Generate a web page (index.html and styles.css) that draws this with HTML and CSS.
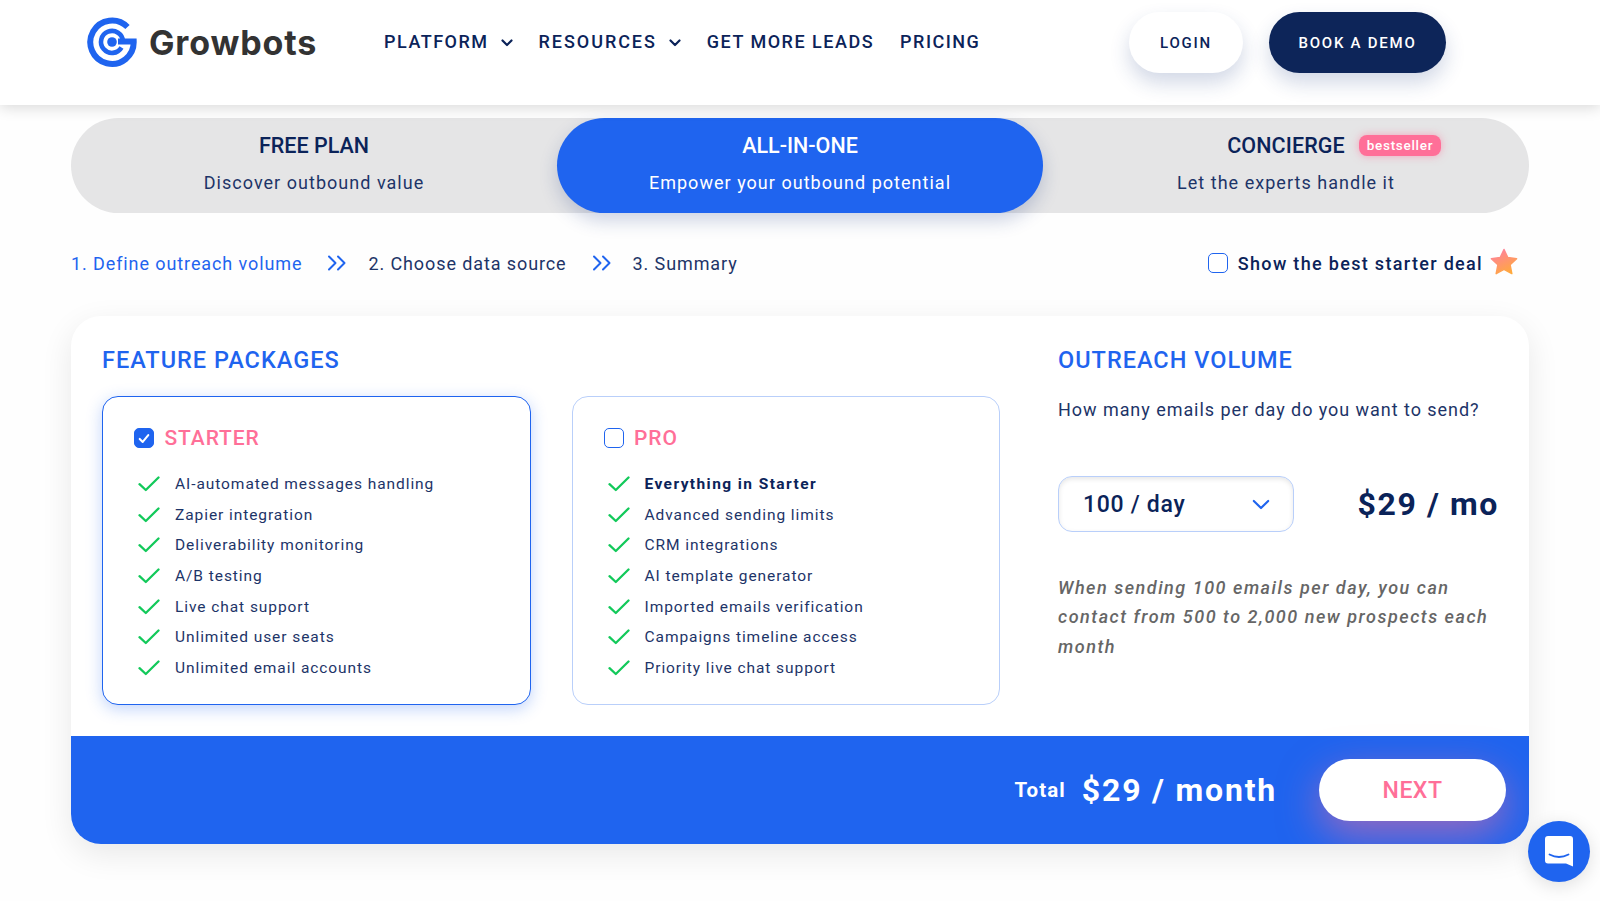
FILE: index.html
```html
<!DOCTYPE html>
<html lang="en">
<head>
<meta charset="utf-8">
<title>Growbots pricing</title>
<link rel="stylesheet" href="styles.css">
</head>
<body>
<svg class="defs" width="0" height="0" aria-hidden="true">
  <symbol id="tick" viewBox="0 0 22 16"><path d="M1.5 8.2 L7.8 14 L20.5 1.5" fill="none" stroke="#12c95a" stroke-width="2.3" stroke-linecap="round" stroke-linejoin="round"/></symbol>
  <symbol id="dbl" viewBox="0 0 20 16"><path d="M2 1.5 L8.5 8 L2 14.5 M11 1.5 L17.5 8 L11 14.5" fill="none" stroke="#1f64ef" stroke-width="2" stroke-linecap="round" stroke-linejoin="round"/></symbol>
  <symbol id="caret" viewBox="0 0 12 8"><path d="M1.5 1.5 L6 6 L10.5 1.5" fill="none" stroke="#0b2359" stroke-width="2.2" stroke-linecap="round" stroke-linejoin="round"/></symbol>
</svg>
<header class="topbar">
  <a class="brand">
    <svg class="logo" viewBox="0 0 52 52" aria-hidden="true">
      <path d="M41.5 11 A21.7 21.7 0 1 0 47.7 25.5 H32" fill="none" stroke="#1f64ef" stroke-width="6"/>
      <path d="M35.5 31.5 A11 11 0 1 1 37 25.5" fill="none" stroke="#1f64ef" stroke-width="4.6"/>
      <circle cx="26" cy="26" r="4.8" fill="#1f64ef"/>
    </svg>
    <span class="brand-name">Growbots</span>
  </a>
  <nav class="nav">
    <a class="nav-item">PLATFORM <svg class="caret"><use href="#caret"/></svg></a>
    <a class="nav-item nav-wide">RESOURCES <svg class="caret"><use href="#caret"/></svg></a>
    <a class="nav-item">GET MORE LEADS</a>
    <a class="nav-item">PRICING</a>
  </nav>
  <div class="actions">
    <a class="btn btn-login">LOGIN</a>
    <a class="btn btn-demo">BOOK A DEMO</a>
  </div>
</header>

<main class="page">
  <section class="tabs">
    <div class="tab">
      <div class="tab-title">FREE PLAN</div>
      <div class="tab-sub">Discover outbound value</div>
    </div>
    <div class="tab tab-active">
      <div class="tab-title">ALL-IN-ONE</div>
      <div class="tab-sub">Empower your outbound potential</div>
    </div>
    <div class="tab">
      <div class="tab-title"><span class="badged">CONCIERGE<span class="badge">bestseller</span></span></div>
      <div class="tab-sub">Let the experts handle it</div>
    </div>
  </section>

  <section class="steps">
    <span class="step step-on">1. Define outreach volume</span>
    <svg class="dbl"><use href="#dbl"/></svg>
    <span class="step">2. Choose data source</span>
    <svg class="dbl"><use href="#dbl"/></svg>
    <span class="step">3. Summary</span>
    <label class="deal">
      <span class="box"></span>
      <span class="deal-text">Show the best starter deal</span>
      <svg class="star" viewBox="0 0 28 28" aria-hidden="true">
        <defs><linearGradient id="sg" x1="0.2" y1="0" x2="0.7" y2="1"><stop offset="0" stop-color="#ff7fa0"/><stop offset="1" stop-color="#ffaa3c"/></linearGradient></defs>
        <path d="M14 1.5 L17.8 9.6 L26.6 10.7 L20.1 16.8 L21.8 25.6 L14 21.3 L6.2 25.6 L7.9 16.8 L1.4 10.7 L10.2 9.6 Z" fill="url(#sg)" stroke="url(#sg)" stroke-width="1.5" stroke-linejoin="round"/>
      </svg>
    </label>
  </section>

  <section class="card">
    <div class="card-body">
      <div class="packages">
        <h2 class="heading">FEATURE PACKAGES</h2>
        <div class="plans">
          <article class="plan plan-on">
            <div class="plan-head">
              <span class="box box-on"><svg viewBox="0 0 14 12" class="box-tick" aria-hidden="true"><path d="M2 6.5 L5.5 10 L12 2" fill="none" stroke="#fff" stroke-width="2.4" stroke-linecap="round" stroke-linejoin="round"/></svg></span>
              <span class="plan-name">STARTER</span>
            </div>
            <ul class="feats">
              <li><svg class="tick"><use href="#tick"/></svg>AI-automated messages handling</li>
              <li><svg class="tick"><use href="#tick"/></svg>Zapier integration</li>
              <li><svg class="tick"><use href="#tick"/></svg>Deliverability monitoring</li>
              <li><svg class="tick"><use href="#tick"/></svg>A/B testing</li>
              <li><svg class="tick"><use href="#tick"/></svg>Live chat support</li>
              <li><svg class="tick"><use href="#tick"/></svg>Unlimited user seats</li>
              <li><svg class="tick"><use href="#tick"/></svg>Unlimited email accounts</li>
            </ul>
          </article>
          <article class="plan">
            <div class="plan-head">
              <span class="box"></span>
              <span class="plan-name">PRO</span>
            </div>
            <ul class="feats">
              <li class="feat-strong"><svg class="tick"><use href="#tick"/></svg>Everything in Starter</li>
              <li><svg class="tick"><use href="#tick"/></svg>Advanced sending limits</li>
              <li><svg class="tick"><use href="#tick"/></svg>CRM integrations</li>
              <li><svg class="tick"><use href="#tick"/></svg>AI template generator</li>
              <li><svg class="tick"><use href="#tick"/></svg>Imported emails verification</li>
              <li><svg class="tick"><use href="#tick"/></svg>Campaigns timeline access</li>
              <li><svg class="tick"><use href="#tick"/></svg>Priority live chat support</li>
            </ul>
          </article>
        </div>
      </div>
      <aside class="volume">
        <h2 class="heading">OUTREACH VOLUME</h2>
        <p class="question">How many emails per day do you want to send?</p>
        <div class="vol-row">
          <div class="select"><span>100 / day</span><svg class="sel-caret" viewBox="0 0 20 12" aria-hidden="true"><path d="M2 2 L10 10 L18 2" fill="none" stroke="#1f64ef" stroke-width="2.4" stroke-linecap="round" stroke-linejoin="round"/></svg></div>
          <div class="price">$29 / mo</div>
        </div>
        <p class="note">When sending 100 emails per day, you can contact from 500 to 2,000 new prospects each month</p>
      </aside>
    </div>
    <footer class="totalbar">
      <span class="total-label">Total</span>
      <span class="total-value">$29 / month</span>
      <a class="btn-next">NEXT</a>
    </footer>
  </section>
</main>

<a class="chat" aria-label="Chat">
  <svg viewBox="0 0 30 34" width="30" height="34" aria-hidden="true">
    <path d="M4 1 H26 A3 3 0 0 1 29 4 V31.5 L22 28.5 H4 A3 3 0 0 1 1 25.5 V4 A3 3 0 0 1 4 1 Z" fill="#fff"/>
    <path d="M5.5 19.5 Q15 24.5 24.5 19.5" fill="none" stroke="#1f64ef" stroke-width="1.8" stroke-linecap="round"/>
  </svg>
</a>
</body>
</html>
```
FILE: styles.css
```css
* { box-sizing: border-box; }
html, body { margin: 0; height: 901px; overflow: hidden; }
body {
  background: #fefefe;
  color: #0b2359;
  font-family: Roboto, "Liberation Sans", sans-serif;
  position: relative;
}
.defs { position: absolute; }
a { color: inherit; text-decoration: none; }

.topbar {
  height: 105px;
  background: #fff;
  box-shadow: 0 2px 14px rgba(0,0,0,.16);
  display: flex;
  align-items: flex-start;
  padding-left: 86px;
  position: relative;
  z-index: 2;
}
.brand { display: flex; align-items: center; margin-top: 16px; width: 298px; flex: none; }
.logo { width: 52px; height: 52px; flex: none; }
.brand-name {
  margin-left: 11px;
  font-family: Inter, Roboto, sans-serif;
  font-size: 34px;
  font-weight: 700;
  color: #333;
  letter-spacing: .85px;
}
.nav { display: flex; gap: 26px; margin-top: 30px; }
.nav-item {
  display: flex;
  align-items: center;
  font-size: 18px;
  font-weight: 500;
  line-height: 23px;
  letter-spacing: 1.5px;
  color: #0b2359;
  white-space: nowrap;
}
.nav-wide { letter-spacing: 1.95px; }
.caret { width: 12px; height: 8px; margin-left: 12px; margin-top: 2px; }
.actions { display: flex; gap: 26px; margin-left: auto; margin-right: 154px; margin-top: 12px; }
.btn {
  height: 61px;
  border-radius: 31px;
  display: flex;
  align-items: center;
  justify-content: center;
  font-size: 15px;
  font-weight: 500;
  letter-spacing: 1.75px;
  box-shadow: 0 10px 20px rgba(30,60,130,.2);
}
.btn-login { width: 114px; background: #fff; color: #0b2359; }
.btn-demo { width: 177px; background: #0d2559; color: #fff; }

.page { padding: 13px 71px 0; }
.tabs {
  height: 95px;
  border-radius: 48px;
  background: #e5e5e6;
  display: grid;
  grid-template-columns: 486px 486px 486px;
}
.tab {
  border-radius: 48px;
  text-align: center;
  padding-top: 14px;
}
.tab-title { font-size: 21.5px; font-weight: 500; line-height: 28px; color: #0b2359; }
.badged { position: relative; display: inline-block; letter-spacing: .1px; }
.tab-sub { margin-top: 11px; font-size: 18px; line-height: 24px; letter-spacing: 1.03px; color: #1d3468; }
.tab-active { background: #1f64ef; box-shadow: 0 8px 18px rgba(30,60,130,.22); }
.tab-active .tab-title, .tab-active .tab-sub { color: #fff; }
.badge {
  position: absolute;
  left: calc(100% + 14px);
  top: 3px;
  height: 21px;
  padding: 0 8px;
  border-radius: 8px;
  background: #ff6f98;
  box-shadow: 0 0 8px rgba(255,111,152,.55);
  color: #fff;
  font-size: 13.5px;
  line-height: 20px;
  font-weight: 500;
  letter-spacing: .7px;
}

.steps { display: flex; align-items: center; height: 24px; margin-top: 38px; padding-right: 11px; font-size: 18px; letter-spacing: .9px; }
.step { color: #1d3468; white-space: nowrap; }
.step-on { color: #1f64ef; }
.dbl { width: 20px; height: 16px; margin: 0 21px 0 25px; flex: none; }
.deal { margin-left: auto; display: flex; align-items: center; }
.deal-text { margin-left: 10px; font-weight: 500; font-size: 18px; letter-spacing: 1.32px; color: #0b2359; white-space: nowrap; }
.star { width: 28px; height: 28px; margin-left: 7px; margin-top: -2px; }
.box {
  width: 20px;
  height: 20px;
  border-radius: 5px;
  border: 1.5px solid #1f64ef;
  background: #fff;
  display: inline-flex;
  align-items: center;
  justify-content: center;
  flex: none;
}
.box-on { background: #1f64ef; }
.box-tick { width: 12px; height: 11px; }

.card {
  margin-top: 41px;
  height: 528px;
  border-radius: 30px;
  background: #fff;
  box-shadow: 0 10px 32px rgba(0,0,0,.09);
  display: flex;
  flex-direction: column;
  overflow: hidden;
}
.card-body { flex: 1; display: flex; padding: 29px 30px 0 31px; }
.heading { margin: 0; font-size: 23.5px; line-height: 30px; font-weight: 500; letter-spacing: 1px; color: #1f64ef; white-space: nowrap; }
.packages { width: 898px; flex: none; }
.plans { display: flex; gap: 41px; margin-top: 21px; }
.plan {
  width: 429px;
  height: 309px;
  border: 1.5px solid #b9cffa;
  border-radius: 16px;
  padding: 27px 30px 0 31px;
  background: #fff;
}
.plan-on { border-color: #1f64ef; box-shadow: 0 4px 16px rgba(31,100,239,.28); }
.plan-head { display: flex; align-items: center; gap: 10.5px; height: 28px; }
.plan-name { font-size: 21px; font-weight: 500; letter-spacing: .9px; color: #ff6f98; }
.feats { list-style: none; margin: 17px 0 0; padding: 0; }
.feats li {
  display: flex;
  align-items: center;
  height: 30.6px;
  font-size: 15.5px;
  letter-spacing: .93px;
  color: #1d3468;
  white-space: nowrap;
}
.feats .feat-strong { font-weight: 700; letter-spacing: 1.42px; color: #0b2359; }
.tick { width: 22px; height: 16px; margin: 0 15px 0 4px; flex: none; }

.volume { margin-left: 58px; flex: 1; }
.question { margin: 22px 0 0; font-size: 18px; line-height: 26px; letter-spacing: .95px; color: #1d3468; white-space: nowrap; }
.vol-row { display: flex; align-items: center; justify-content: space-between; margin-top: 53px; }
.select {
  width: 236px;
  height: 56px;
  border: 1.5px solid #b9cffa;
  border-radius: 14px;
  box-shadow: inset 0 2px 5px rgba(0,0,0,.1);
  display: flex;
  align-items: center;
  justify-content: space-between;
  padding: 0 23px 0 24px;
  font-size: 23px;
  font-weight: 500;
  letter-spacing: .7px;
  color: #0b2359;
}
.sel-caret { width: 18px; height: 11px; }
.price { font-size: 32px; font-weight: 700; letter-spacing: 1.6px; color: #0b2359; white-space: nowrap; }
.note { margin: 41px 0 0; font-size: 18px; font-style: italic; font-weight: 500; line-height: 29.4px; letter-spacing: 1.52px; color: #666; }

.totalbar {
  height: 108px;
  flex: none;
  background: #1f64ef;
  display: flex;
  align-items: center;
  justify-content: flex-end;
  padding-right: 23px;
  color: #fff;
  font-weight: 700;
}
.total-label { font-size: 20.5px; letter-spacing: 1.1px; }
.total-value { margin-left: 16px; font-size: 32px; letter-spacing: 1.8px; white-space: nowrap; }
.btn-next {
  margin-left: 42px;
  width: 187px;
  height: 62px;
  border-radius: 31px;
  background: #fff;
  color: #ff6f98;
  display: flex;
  align-items: center;
  justify-content: center;
  font-size: 23px;
  font-weight: 500;
  letter-spacing: .5px;
  box-shadow: 0 14px 40px rgba(255,111,152,.55);
}

.chat {
  position: absolute;
  left: 1528px;
  top: 821px;
  width: 62px;
  height: 61px;
  border-radius: 50%;
  background: #1f64ef;
  box-shadow: 0 4px 18px rgba(0,0,0,.12);
  display: flex;
  align-items: center;
  justify-content: center;
}
```
